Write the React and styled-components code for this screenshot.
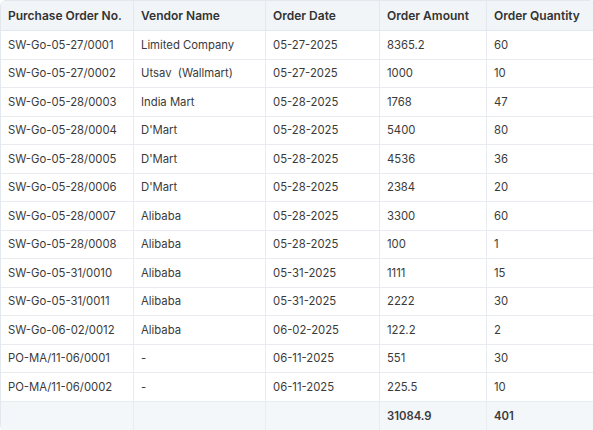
import React from "react";
import styled, { createGlobalStyle } from "styled-components";

const G = createGlobalStyle`
  html,body{margin:0;padding:0;background:#fff;}
  body{font-family:Inter,"Open Sans",sans-serif;}
`;
const Table = styled.table`
  width:593px;border-collapse:separate;border-spacing:0;table-layout:fixed;
  border:1px solid #e3e8ee;border-radius:6px;overflow:hidden;color:#333;
`;
const Th = styled.th`
  height:29px;padding:0 7px;text-align:left;font-size:12px;font-weight:600;
  background:#f2f5f8;border-bottom:1px solid #e3e8ee;border-right:1px solid #e3e8ee;
  &:last-child{border-right:none;}
`;
const Td = styled.td`
  height:27.5px;padding:0 7px;font-size:11.3px;font-weight:400;color:#3a3a3a;
  border-bottom:1px solid #e8ecf0;border-right:1px solid #e8ecf0;white-space:pre;
  background:${p=>p.$foot?"#f4f7fa":"#fff"};
  ${p=>p.$foot&&"font-weight:600;border-bottom:none;height:28px;"}
  &:last-child{border-right:none;}
`;
const rows=[
["SW-Go-05-27/0001","Limited Company","05-27-2025","8365.2","60"],
["SW-Go-05-27/0002","Utsav  (Wallmart)","05-27-2025","1000","10"],
["SW-Go-05-28/0003","India Mart","05-28-2025","1768","47"],
["SW-Go-05-28/0004","D'Mart","05-28-2025","5400","80"],
["SW-Go-05-28/0005","D'Mart","05-28-2025","4536","36"],
["SW-Go-05-28/0006","D'Mart","05-28-2025","2384","20"],
["SW-Go-05-28/0007","Alibaba","05-28-2025","3300","60"],
["SW-Go-05-28/0008","Alibaba","05-28-2025","100","1"],
["SW-Go-05-31/0010","Alibaba","05-31-2025","1111","15"],
["SW-Go-05-31/0011","Alibaba","05-31-2025","2222","30"],
["SW-Go-06-02/0012","Alibaba","06-02-2025","122.2","2"],
["PO-MA/11-06/0001","-","06-11-2025","551","30"],
["PO-MA/11-06/0002","-","06-11-2025","225.5","10"],
];
const widths=[133,132,114,107,107];
export default function App(){
  return <><G/>
  <Table>
    <colgroup>{widths.map((w,i)=><col key={i} style={{width:w}}/>)}</colgroup>
    <thead><tr>{["Purchase Order No.","Vendor Name","Order Date","Order Amount","Order Quantity"].map(h=><Th key={h}>{h}</Th>)}</tr></thead>
    <tbody>
      {rows.map((r,i)=><tr key={i}>{r.map((c,j)=><Td key={j}>{c}</Td>)}</tr>)}
      <tr>{["","","","31084.9","401"].map((c,j)=><Td $foot key={j}>{c}</Td>)}</tr>
    </tbody>
  </Table></>;
}
